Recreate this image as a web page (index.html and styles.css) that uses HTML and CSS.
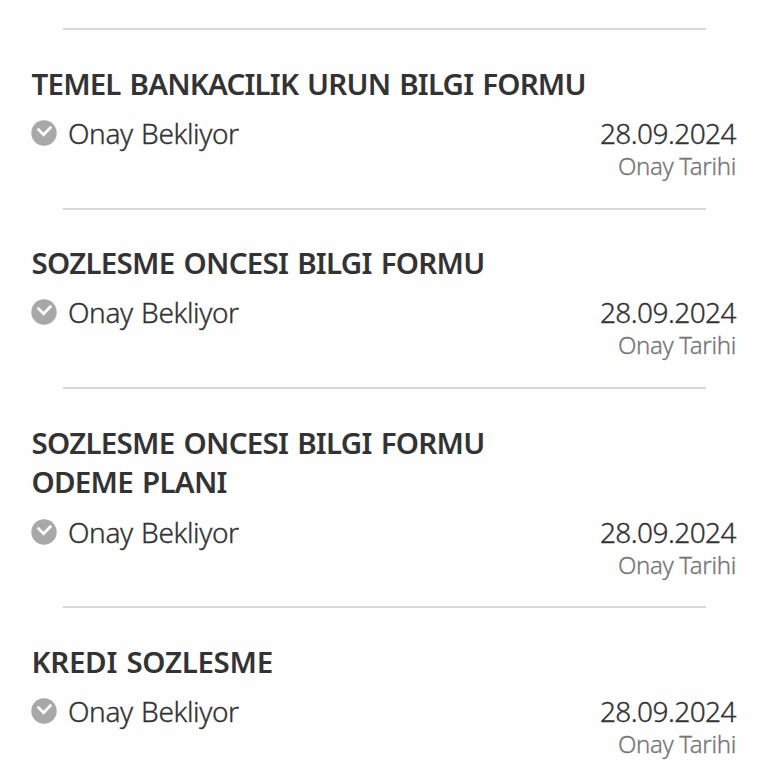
FILE: index.html
```html
<!DOCTYPE html>
<html lang="tr">
<head>
<meta charset="utf-8">
<title>Onay Bekleyen Formlar</title>
<link rel="stylesheet" href="styles.css">
</head>
<body>

<svg width="0" height="0" class="symbols">
  <symbol id="pending" viewBox="0 0 26 26">
    <circle cx="13" cy="13" r="12.7" fill="#a8a8a8"/>
    <path d="M6.6 8.6l6 6.2 7.6-8" fill="none" stroke="#fff" stroke-width="2.7"/>
  </symbol>
</svg>

<div class="forms">
  <div class="form">
    <h2 class="urun">TEMEL BANKACILIK URUN BILGI FORMU</h2>
    <div class="row">
      <div class="status"><svg class="icon"><use href="#pending"/></svg><span>Onay Bekliyor</span></div>
      <div class="date"><b>28.09.2024</b><small>Onay Tarihi</small></div>
    </div>
  </div>

  <div class="form">
    <h2>SOZLESME ONCESI BILGI FORMU</h2>
    <div class="row">
      <div class="status"><svg class="icon"><use href="#pending"/></svg><span>Onay Bekliyor</span></div>
      <div class="date"><b>28.09.2024</b><small>Onay Tarihi</small></div>
    </div>
  </div>

  <div class="form">
    <h2>SOZLESME ONCESI BILGI FORMU<br>ODEME PLANI</h2>
    <div class="row">
      <div class="status"><svg class="icon"><use href="#pending"/></svg><span>Onay Bekliyor</span></div>
      <div class="date"><b>28.09.2024</b><small>Onay Tarihi</small></div>
    </div>
  </div>

  <div class="form">
    <h2 class="kredi">KREDI SOZLESME</h2>
    <div class="row">
      <div class="status"><svg class="icon"><use href="#pending"/></svg><span>Onay Bekliyor</span></div>
      <div class="date"><b>28.09.2024</b><small>Onay Tarihi</small></div>
    </div>
  </div>
</div>

</body>
</html>
```
FILE: styles.css
```css
body {
  margin:0;
  background:#fefefe;
  color:#333;
  font-family:"Noto Sans", "Open Sans", sans-serif;
  overflow:hidden;
}

.symbols {
  display:block;
}

.forms {
  padding:28px 32px 0;
}

/* short divider, inset from both sides of the item */
.form::before {
  content:"";
  display:block;
  height:2px;
  margin:0 30.5px 0 31px;
  background:#d8d8d8;
}

.form {
  padding-bottom:26.7px;
}

.form h2 {
  margin:0 0 0 -.5px;
  padding-top:33.6px;
  font-size:29.5px;
  line-height:39.7px;
  font-weight:600;
  letter-spacing:-.72px;
  word-spacing:2px;
  white-space:nowrap;
}

.form .urun {
  letter-spacing:-.81px;
}

.form .kredi {
  letter-spacing:-.3px;
}

.row {
  display:flex;
  justify-content:space-between;
  padding-top:10.6px;
}

.status {
  display:flex;
  height:38px;
  align-items:center;
  font-size:28px;
  font-weight:300;
  letter-spacing:-.4px;
  word-spacing:1.5px;
  -webkit-text-stroke:.35px;
}

.icon {
  width:26px;
  height:26px;
  margin-right:11px;
  margin-left:-1px;
  -webkit-text-stroke:0;
}

.date {
  display:flex;
  flex-direction:column;
  align-items:flex-end;
}

.date b {
  font-size:28px;
  line-height:38px;
  font-weight:300;
  letter-spacing:-.55px;
  -webkit-text-stroke:.35px;
}

.date small {
  margin-top:-1px;
  font-size:24px;
  line-height:30px;
  font-weight:300;
  letter-spacing:-.33px;
  -webkit-text-stroke:.3px;
  color:#767676;
}
```
